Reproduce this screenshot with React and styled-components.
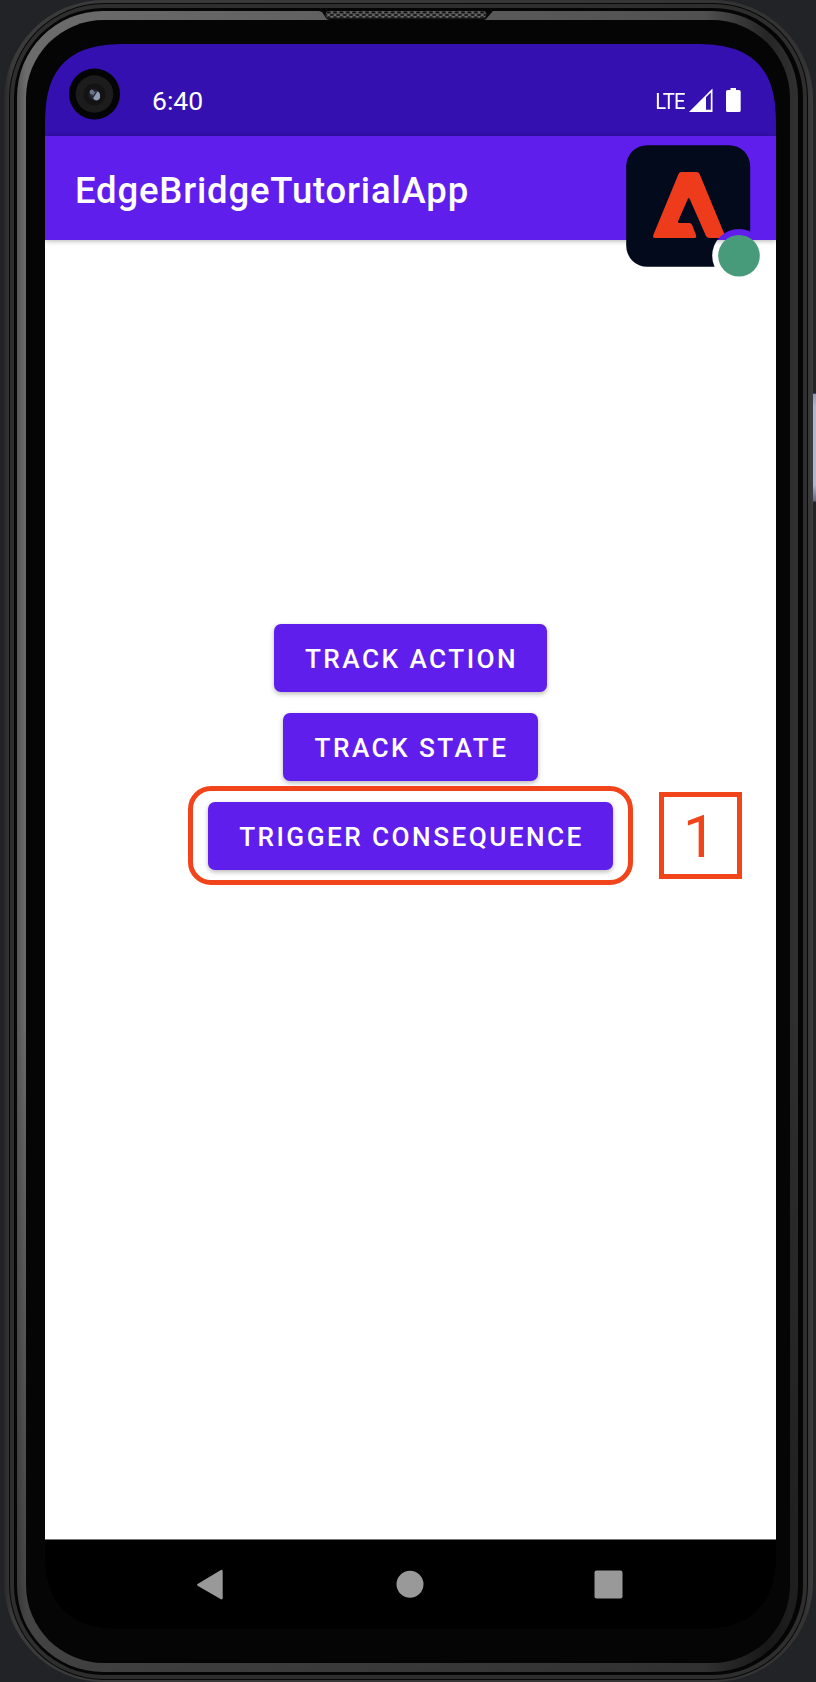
import React from "react";
import styled, { createGlobalStyle } from "styled-components";

const GlobalStyle = createGlobalStyle`
  * { box-sizing: border-box; }
  html, body { margin: 0; padding: 0; background: #222327; }
  body { font-family: Roboto, "Liberation Sans", sans-serif; }
`;

const Stage = styled.main`
  position: relative;
  width: 816px;
  height: 1682px;
  padding: 0 3px 0 4px;
  overflow: hidden;
  background: #222327;
`;

const PowerKey = styled.div`
  position: absolute;
  top: 393px;
  right: 0;
  width: 4px;
  height: 109px;
  border: 1px solid #41485f;
  border-right: 0;
  background: linear-gradient(#9698b0, #b4b5d0 12%, #b4b5d0 85%, #65677f);
`;

const Ring = styled.div`
  height: ${(p) => p.$height || "100%"};
  padding: ${(p) => p.$pad};
  border-radius: ${(p) => p.$radius}px;
  background: ${(p) => p.$fill};
  position: relative;
`;

const Speaker = styled.svg`
  position: absolute;
  left: 302px;
  top: 0;
  display: block;
`;

const Screen = styled.div`
  height: 1585px;
  border-radius: 68px;
  overflow: hidden;
  display: flex;
  flex-direction: column;
  background: #000;

  @supports (corner-shape: superellipse(1.45)) {
    border-radius: 84px;
    corner-shape: superellipse(1.45);
  }
`;

const StatusBar = styled.header`
  position: relative;
  flex: 0 0 92px;
  display: flex;
  align-items: flex-start;
  padding: 41px 34px 0 107px;
  color: #fff;
  background: #3410b0;
`;

const Clock = styled.time`
  flex: 1;
  font-size: 26.5px;
  line-height: 32px;
`;

const Network = styled.span`
  margin: 1px 4px 0 0;
  font-size: 22.5px;
  font-weight: 400;
  line-height: 30px;
  letter-spacing: -0.9px;
  transform: scaleX(0.9);
  transform-origin: right;
`;

const StatusIcons = styled.svg`
  display: block;
  margin-top: 2px;
`;

const Camera = styled.svg`
  position: absolute;
  left: 24px;
  top: 24px;
`;

const AppBar = styled.div`
  position: relative;
  z-index: 1;
  flex: 0 0 104px;
  display: flex;
  align-items: center;
  padding: 5px 0 0 30px;
  background: #5f1eeb;
  box-shadow: 0 1px 5px rgba(0, 0, 0, 0.3);
`;

const Title = styled.h1`
  margin: 0;
  color: #fff;
  font-size: 36.5px;
  font-weight: 500;
  line-height: 44px;
  letter-spacing: 0.82px;
`;

const AssuranceBadge = styled.svg`
  position: absolute;
  left: 575px;
  top: 4px;
`;

const Content = styled.section`
  flex: 1;
  display: flex;
  flex-direction: column;
  align-items: center;
  padding-top: 384px;
  background: #fff;
`;

const ActionButton = styled.button`
  width: ${(p) => p.$width}px;
  height: 68px;
  flex: none;
  margin: 0 0 ${(p) => p.$after || 0}px;
  padding: 2px 0 0 2px;
  border: 0;
  border-radius: 7px;
  background: #5f1eeb;
  box-shadow: 0 2px 5px rgba(0, 0, 0, 0.28);
  color: #fff;
  font: 500 26.2px/32px Roboto, "Liberation Sans", sans-serif;
  letter-spacing: 2.45px;
  white-space: nowrap;
`;

const StepRow = styled.div`
  align-self: stretch;
  display: flex;
  align-items: center;
  gap: 26px;
  padding-left: 143px;
`;

const Highlight = styled.div`
  width: 445px;
  height: 99px;
  padding: 11px 15px;
  border: 5px solid #f1441b;
  border-radius: 23px;
`;

const StepNumber = styled.div`
  width: 83px;
  height: 87px;
  display: flex;
  align-items: center;
  justify-content: center;
  padding: 3px 2px 0 0;
  border: 5px solid #f1441b;
  color: #f1441b;
  font: 450 59px/70px Roboto, "Liberation Sans", sans-serif;
`;

const NavBar = styled.nav`
  flex: 0 0 90px;
  display: flex;
  justify-content: space-between;
  align-items: flex-start;
  padding: 29px 153px 0 151px;
  border-top: 1px solid #777;
  background: #000;
`;

const Icon = styled.svg`
  display: block;
`;

function SpeakerGrille() {
  return (
    <Speaker width="174" height="12" viewBox="0 0 174 12">
      <defs>
        <pattern id="mesh" width="6.4" height="5" patternUnits="userSpaceOnUse">
          <rect width="6.4" height="5" fill="#686868" />
          <ellipse cx="3.2" cy="1.4" rx="2.2" ry="1.2" fill="#101010" />
          <ellipse cx="0" cy="3.9" rx="2.2" ry="1.1" fill="#181818" />
          <ellipse cx="6.4" cy="3.9" rx="2.2" ry="1.1" fill="#181818" />
        </pattern>
      </defs>
      <path d="M0 0H174L167 8Q166 9 164 9H11Q8 9 7 7L3 1Z" fill="#080808" />
      <rect x="7" y="0" width="160" height="7" rx="3" fill="url(#mesh)" stroke="#3c3c3c" strokeWidth=".6" />
    </Speaker>
  );
}

function FrontCamera() {
  return (
    <Camera width="52" height="52" viewBox="0 0 52 52">
      <defs>
        <radialGradient id="lens">
          <stop offset="0" stopColor="#525a6c" />
          <stop offset=".55" stopColor="#242833" />
          <stop offset="1" stopColor="#121214" />
        </radialGradient>
      </defs>
      <circle cx="25.5" cy="26" r="25.5" fill="#040405" />
      <circle cx="25.5" cy="26" r="18.8" fill="#1c1c1c" />
      <circle cx="25.5" cy="26.5" r="11" fill="#131313" />
      <circle cx="25.2" cy="26.5" r="6.5" fill="url(#lens)" />
      <ellipse cx="27.5" cy="28" rx="3.6" ry="4.4" fill="#8f9cb3" />
      <ellipse cx="22.8" cy="24" rx="2.2" ry="2.6" fill="#69748a" />
      <path d="M23.5 29.5L27.5 23.5" stroke="#252a38" strokeWidth="1.6" />
    </Camera>
  );
}

function Badge() {
  return (
    <AssuranceBadge width="146" height="140" viewBox="620 140 146 140">
      <defs>
        <mask id="cutout">
          <rect x="620" y="140" width="146" height="140" fill="#fff" />
          <circle cx="739" cy="255.7" r="26.8" fill="#000" />
        </mask>
      </defs>
      <g mask="url(#cutout)">
        <rect x="626.2" y="145.2" width="124" height="121.6" rx="21" fill="#020a1b" />
        <path
          d="M681.5 172H696.5Q698.7 172 699.6 174L724.6 234.5Q725.8 238 722.5 238H709.5Q707 238 706 236L689.7 199Q688.8 197 687.8 199L678.2 221Q677.5 223 679 223H689.5Q691.2 223 692 224.8L695.9 234.8Q697 238 694.5 238H655Q652.3 238 653.4 234.8L678.5 174Q679.4 172 681.5 172Z"
          fill="#ed3b1c"
        />
      </g>
      <circle cx="739" cy="255.7" r="20.8" fill="#479b7a" />
    </AssuranceBadge>
  );
}

function Device({ children }) {
  return (
    <Ring $height="1682px" $radius={100} $pad="3px 5px 2px 5px" $fill="linear-gradient(90deg, #292929, #3b3b3b 1%, #333 99%, #3c3c3c)">
      <Ring $radius={95} $pad="1px" $fill="#080808">
        <Ring $radius={94} $pad="4px 4px 4px 4px" $fill="#2e2e2e">
          <Ring $radius={90} $pad="3px 5px 3px 3px" $fill="#050505">
            <Ring
              $radius={86}
              $pad="9px 8px 9px 9px"
              $fill="linear-gradient(transparent 60%, rgba(0,0,0,.4) 100%), linear-gradient(90deg, #565656 0, #6c6c6c 9px, #5a5a5a 60%, #505050 88%, #262626 96%, #303030 100%)"
            >
              <Ring $radius={78} $pad="24px 14px 34px 19px" $fill="#050505">
                {children}
              </Ring>
              <SpeakerGrille />
            </Ring>
          </Ring>
        </Ring>
      </Ring>
    </Ring>
  );
}

export default function App() {
  return (
    <>
      <GlobalStyle />
      <Stage>
        <PowerKey />
        <Device>
          <Screen>
            <StatusBar>
              <FrontCamera />
              <Clock>6:40</Clock>
              <Network>LTE</Network>
              <StatusIcons width="53" height="26" viewBox="0 0 53 26">
                <path d="M0 25L23.5 1.5V25Z" fill="#fff" />
                <path d="M17 10.2L21.8 5.4V22.8H17Z" fill="#3410b0" />
                <path d="M41.5 1H47V3H50Q51.7 3 51.7 4.7V23.5Q51.7 25 50 25H38.7Q37 25 37 23.5V4.7Q37 3 38.7 3H41.5Z" fill="#fff" />
              </StatusIcons>
            </StatusBar>
            <AppBar>
              <Title>EdgeBridgeTutorialApp</Title>
              <Badge />
            </AppBar>
            <Content>
              <ActionButton $width={273} $after={21}>TRACK ACTION</ActionButton>
              <ActionButton $width={255} $after={5}>TRACK STATE</ActionButton>
              <StepRow>
                <Highlight>
                  <ActionButton $width={405}>TRIGGER CONSEQUENCE</ActionButton>
                </Highlight>
                <StepNumber>1</StepNumber>
              </StepRow>
            </Content>
            <NavBar>
              <Icon width="28" height="32" viewBox="0 0 28 32">
                <path d="M2 14.8L24.5 1.2Q26.7 0 26.7 2.5V29Q26.7 31.2 24.5 30L2 17Q0 15.8 2 14.8Z" fill="#999" />
              </Icon>
              <Icon width="30" height="32" viewBox="0 0 30 32">
                <circle cx="16" cy="15.3" r="13.5" fill="#999" />
              </Icon>
              <Icon width="29" height="32" viewBox="0 0 29 32">
                <rect x=".5" y="1.5" width="28" height="28" rx="2" fill="#999" />
              </Icon>
            </NavBar>
          </Screen>
        </Device>
      </Stage>
    </>
  );
}
